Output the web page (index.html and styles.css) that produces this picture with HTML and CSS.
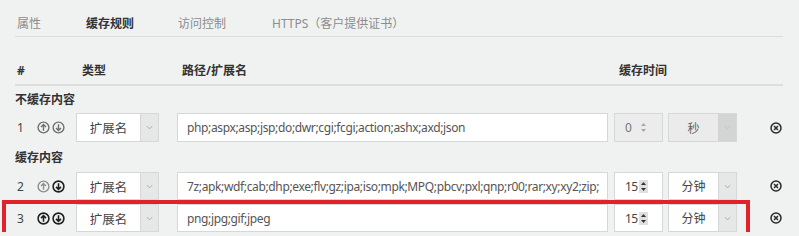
FILE: index.html
```html
<!DOCTYPE html>
<html lang="zh-CN">
<head>
<meta charset="utf-8">
<title>缓存规则</title>
<link rel="stylesheet" href="styles.css">
</head>
<body>
<div class="page">
  <div class="tabs">
    <span class="tab tab-1">属性</span>
    <span class="tab tab-2 active">缓存规则</span>
    <span class="tab tab-3">访问控制</span>
    <span class="tab tab-4">HTTPS（客户提供证书）</span>
  </div>

  <div class="head">
    <span class="h-num">#</span>
    <span class="h-type">类型</span>
    <span class="h-path">路径/扩展名</span>
    <span class="h-time">缓存时间</span>
  </div>

  <div class="section first">不缓存内容</div>

  <div class="row row-1 disabled">
    <div class="c-num">
      <span class="idx">1</span>
      <svg class="mv mid" viewBox="0 0 13 13"><circle cx="6.5" cy="6.5" r="5.4"/><path d="M6.5 9.8V3.6M4 6.1L6.5 3.6 9 6.1"/></svg>
      <svg class="mv mid" viewBox="0 0 13 13"><circle cx="6.5" cy="6.5" r="5.4"/><path d="M6.5 3.2v6.2M4 6.9L6.5 9.4 9 6.9"/></svg>
    </div>
    <div class="sel"><span class="sel-text">扩展名</span><span class="sel-arrow"><svg viewBox="0 0 8 5"><path d="M1 1l3 3 3-3"/></svg></span></div>
    <div class="path">php;aspx;asp;jsp;do;dwr;cgi;fcgi;action;ashx;axd;json</div>
    <div class="spin"><span class="spin-val">0</span><span class="spin-btn"><svg viewBox="0 0 9 13"><path d="M4.5 2L7 5H2z"/><path d="M4.5 11L7 8H2z"/></svg></span></div>
    <div class="unit"><span class="unit-text">秒</span><span class="unit-arrow"><svg viewBox="0 0 8 5"><path d="M1 1l3 3 3-3"/></svg></span></div>
    <div class="del"><svg viewBox="0 0 12 12"><circle cx="6" cy="6" r="5"/><path d="M4 4l4 4M8 4l-4 4"/></svg></div>
  </div>

  <div class="section second">缓存内容</div>

  <div class="row row-2">
    <div class="c-num">
      <span class="idx">2</span>
      <svg class="mv light" viewBox="0 0 13 13"><circle cx="6.5" cy="6.5" r="5.4"/><path d="M6.5 9.8V3.6M4 6.1L6.5 3.6 9 6.1"/></svg>
      <svg class="mv dark" viewBox="0 0 13 13"><circle cx="6.5" cy="6.5" r="5.4"/><path d="M6.5 3.2v6.2M4 6.9L6.5 9.4 9 6.9"/></svg>
    </div>
    <div class="sel"><span class="sel-text">扩展名</span><span class="sel-arrow"><svg viewBox="0 0 8 5"><path d="M1 1l3 3 3-3"/></svg></span></div>
    <div class="path">7z;apk;wdf;cab;dhp;exe;flv;gz;ipa;iso;mpk;MPQ;pbcv;pxl;qnp;r00;rar;xy;xy2;zip;</div>
    <div class="spin"><span class="spin-val">15</span><span class="spin-btn"><svg viewBox="0 0 9 13"><path d="M4.5 2L7 5H2z"/><path d="M4.5 11L7 8H2z"/></svg></span></div>
    <div class="unit"><span class="unit-text">分钟</span><span class="unit-arrow"><svg viewBox="0 0 8 5"><path d="M1 1l3 3 3-3"/></svg></span></div>
    <div class="del"><svg viewBox="0 0 12 12"><circle cx="6" cy="6" r="5"/><path d="M4 4l4 4M8 4l-4 4"/></svg></div>
  </div>

  <div class="row row-3 marked">
    <div class="c-num">
      <span class="idx">3</span>
      <svg class="mv dark" viewBox="0 0 13 13"><circle cx="6.5" cy="6.5" r="5.4"/><path d="M6.5 9.8V3.6M4 6.1L6.5 3.6 9 6.1"/></svg>
      <svg class="mv dark" viewBox="0 0 13 13"><circle cx="6.5" cy="6.5" r="5.4"/><path d="M6.5 3.2v6.2M4 6.9L6.5 9.4 9 6.9"/></svg>
    </div>
    <div class="sel"><span class="sel-text">扩展名</span><span class="sel-arrow"><svg viewBox="0 0 8 5"><path d="M1 1l3 3 3-3"/></svg></span></div>
    <div class="path">png;jpg;gif;jpeg</div>
    <div class="spin"><span class="spin-val">15</span><span class="spin-btn"><svg viewBox="0 0 9 13"><path d="M4.5 2L7 5H2z"/><path d="M4.5 11L7 8H2z"/></svg></span></div>
    <div class="unit"><span class="unit-text">分钟</span><span class="unit-arrow"><svg viewBox="0 0 8 5"><path d="M1 1l3 3 3-3"/></svg></span></div>
    <div class="del"><svg viewBox="0 0 12 12"><circle cx="6" cy="6" r="5"/><path d="M4 4l4 4M8 4l-4 4"/></svg></div>
  </div>
</div>
</body>
</html>
```

FILE: styles.css
```css
html, body {
  margin: 0;
  padding: 0;
  background: #f0f2f2;
}

body {
  font-family: "Noto Sans", "Noto Sans CJK SC", sans-serif;
  font-size: 12px;
  color: #333;
  overflow: hidden;
}

.page {
  width: 768px;
  padding-left: 15px;
}

/* tabs */
.tabs {
  display: flex;
  height: 20px;
  padding-top: 16px;
  line-height: 16px;
  border-bottom: 1px solid #d9dcdc;
  color: #8c8c8c;
}
.tab-1 { margin-left: 2px; }
.tab-2 { margin-left: 45px; }
.tab-3 { margin-left: 44px; }
.tab-4 { margin-left: 46px; }
.tab.active {
  color: #333;
  font-weight: bold;
}

/* header */
.head {
  display: flex;
  margin-top: 26px;
  height: 16px;
  line-height: 16px;
  padding-bottom: 5px;
  border-bottom: 2px solid #dcdfdf;
  font-weight: bold;
  color: #333;
}
.h-num { width: 65px; padding-left: 2px; }
.h-type { width: 100px; }
.h-path { width: 437px; }

.section {
  font-weight: bold;
  line-height: 16px;
  color: #333;
}
.section.first { margin-top: 6px; }
.section.second { margin-top: 8px; }

/* rows */
.row {
  display: flex;
  align-items: stretch;
  height: 28px;
}
.row-1 { margin-top: 5px; height: 29px; }
.row-2 { margin-top: 6px; }
.row-3 { margin-top: 4px; }

.marked { position: relative; }
.marked::after {
  content: "";
  position: absolute;
  top: -4px;
  bottom: -4px;
  left: -13px;
  right: 33px;
  border: 4px solid #e2222a;
  pointer-events: none;
}

.c-num {
  width: 61px;
  display: flex;
  align-items: center;
}
.idx {
  width: 22px;
  padding-left: 2px;
  box-sizing: border-box;
  color: #444;
  font-size: 12px;
}
.mv {
  width: 13px;
  height: 13px;
  fill: none;
  stroke-width: 1.4;
  margin-right: 2px;
}
.mv.mid { stroke: #6f6f6f; }
.mv.light { stroke: #8e8e8e; }
.mv.dark { stroke: #1f1f1f; stroke-width: 1.6; }

.sel {
  width: 83px;
  display: flex;
  box-sizing: border-box;
  border: 1px solid #d6d8d8;
  background: #fff;
  margin-right: 18px;
}
.sel-text {
  flex: 1;
  display: flex;
  align-items: center;
  justify-content: center;
  color: #444;
  font-size: 12.5px;
}
.sel-arrow,
.unit-arrow {
  width: 17px;
  display: flex;
  align-items: center;
  justify-content: center;
  background: #e6e7e7;
  border-left: 1px solid #d6d8d8;
}
.sel-arrow svg,
.unit-arrow svg {
  width: 7px;
  height: 5px;
  fill: none;
  stroke: #a0a2a2;
  stroke-width: 1;
}

.path {
  width: 431px;
  box-sizing: border-box;
  border: 1px solid #d6d8d8;
  background: #fff;
  padding-left: 9px;
  display: flex;
  align-items: center;
  color: #555;
  white-space: nowrap;
  overflow: hidden;
  letter-spacing: -0.36px;
  margin-right: 6px;
}

.spin {
  width: 49px;
  box-sizing: border-box;
  border: 1px solid #d6d8d8;
  background: #fff;
  display: flex;
  align-items: center;
  padding-left: 10px;
  margin-right: 5px;
  color: #444;
}
.spin-val {
  width: 14px;
  letter-spacing: -0.5px;
}
.spin-btn {
  width: 9px;
  height: 13px;
  background: #dedfdf;
  display: flex;
}
.spin-btn svg {
  width: 9px;
  height: 13px;
  fill: #333;
}

.unit {
  width: 69px;
  box-sizing: border-box;
  border: 1px solid #d6d8d8;
  background: #fff;
  display: flex;
}
.unit-text {
  flex: 1;
  display: flex;
  align-items: center;
  justify-content: center;
  color: #444;
}

.del {
  margin-left: 33px;
  display: flex;
  align-items: center;
}
.del svg {
  width: 12px;
  height: 12px;
  fill: none;
  stroke: #2a2a2a;
  stroke-width: 1.5;
}

/* disabled row */
.disabled .spin {
  background: #ececec;
  color: #777;
}
.disabled .spin-btn { background: transparent; }
.disabled .spin-btn svg { fill: #a8a8a8; }
.disabled .unit {
  background: #ebebeb;
}
.disabled .unit-text { color: #666; }
.disabled .unit-arrow {
  background: #d3d4d4;
  border-left-color: #d3d4d4;
}
.disabled .unit-arrow svg { stroke: #c2c2c2; }
```
